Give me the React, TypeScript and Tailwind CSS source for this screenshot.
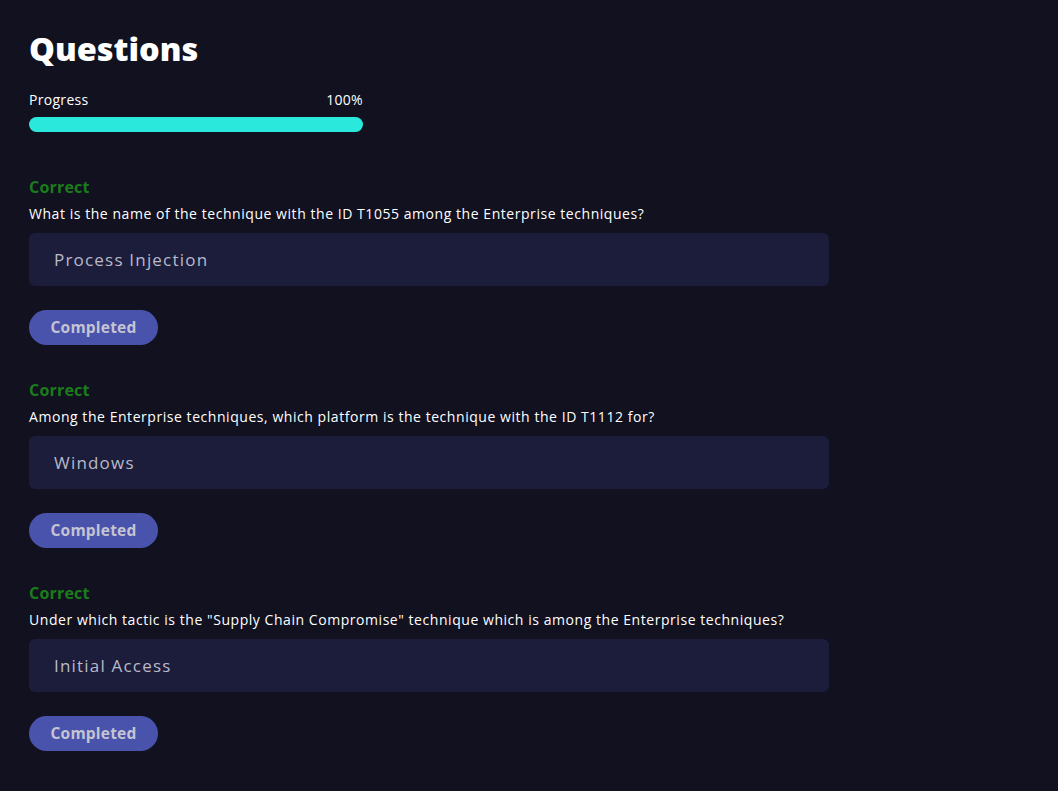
import React from "react";

const questions = [
  {
    q: "What is the name of the technique with the ID T1055 among the Enterprise techniques?",
    a: "Process Injection",
  },
  {
    q: "Among the Enterprise techniques, which platform is the technique with the ID T1112 for?",
    a: "Windows",
  },
  {
    q: 'Under which tactic is the "Supply Chain Compromise" technique which is among the Enterprise techniques?',
    a: "Initial Access",
  },
];

export default function App() {
  return (
    <div className="min-h-[791px] bg-[#11111f] px-[29px] pt-[29px] font-['Open_Sans',sans-serif] text-white">
      <h1 className="text-[32.5px] font-extrabold leading-[40px]">Questions</h1>

      {/* progress */}
      <div className="mt-[22px] w-[334px]">
        <div className="flex justify-between text-[14px] font-medium leading-[18px] tracking-[0.3px]">
          <span>Progress</span>
          <span>100%</span>
        </div>
        <div className="mt-[8px] h-[15px] w-full rounded-full bg-[#2ae8dc]" />
      </div>

      <div className="mt-[45px] flex flex-col gap-[35px]">
        {questions.map((item) => (
          <div key={item.a}>
            <div className="text-[16px] font-bold leading-[20px] tracking-[0.2px] text-[#1b7c1b]">
              Correct
            </div>
            <p className="mt-[8px] text-[14px] leading-[18px] tracking-[0.55px]">{item.q}</p>
            <div className="mt-[10px] flex h-[53px] w-[800px] items-center rounded-[6px] bg-[#1b1d3b] pl-[25px] text-[17px] font-medium tracking-[1.2px] text-[#b9b9c9]">
              {item.a}
            </div>
            <button className="mt-[24px] flex h-[35px] w-[129px] items-center justify-center rounded-full bg-[#4a53ac] text-[15.5px] font-bold tracking-[0.2px] text-[#c4c4d2]">
              Completed
            </button>
          </div>
        ))}
      </div>
    </div>
  );
}
